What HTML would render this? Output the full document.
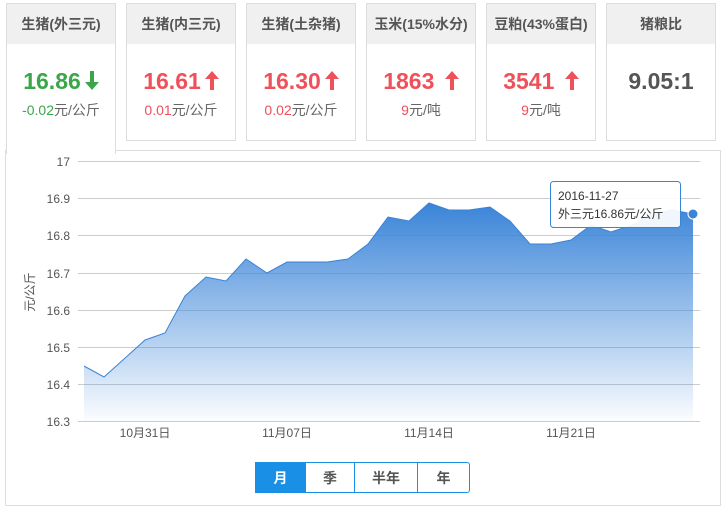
<!DOCTYPE html><html><head><meta charset="utf-8"><style>
body{margin:0;width:727px;height:512px;background:#fff;font-family:"Liberation Sans","Noto Sans CJK SC",sans-serif;position:relative;overflow:hidden}
.c{position:absolute;top:3px;width:108px;height:136px;border:1px solid #ddd;background:#fff;text-align:center}
.c .h{height:40px;background:#f0f0f0;line-height:40px;font-size:14px;font-weight:bold;color:#555}
.c .v{margin-top:22px;font-size:23px;font-weight:bold;line-height:30px}
.c .s{margin-top:4px;font-size:14px;color:#666}
.r{color:#f0505a}.g{color:#3aa64a}
.ar{display:inline-block;vertical-align:-1px;margin-left:4px}
#ch{position:absolute;left:5px;top:150px;width:714px;height:354px;border:1px solid #ddd;background:#fff}
.bt{position:absolute;top:462px;height:31px;line-height:31px;text-align:center;font-size:14px;font-weight:bold;color:#555;border:1px solid #1a8fe6;box-sizing:border-box;background:#fff}
</style></head><body>
<div id="ch"></div>
<div class="c" style="left:6px;height:150px;border-bottom:none"><div class="h">生猪(外三元)</div><div class="v g">16.86<svg class="ar" width="14" height="19" viewBox="0 0 14 19"><path d="M5 0H9V11H14L7 19L0 11H5Z" fill="#3aa64a"/></svg></div><div class="s"><span class="g">-0.02</span>元/公斤</div></div>
<div class="c" style="left:126px"><div class="h">生猪(内三元)</div><div class="v r">16.61<svg class="ar" width="14" height="19" viewBox="0 0 14 19"><path d="M5 19H9V8H14L7 0L0 8H5Z" fill="#f0505a"/></svg></div><div class="s"><span class="r">0.01</span>元/公斤</div></div>
<div class="c" style="left:246px"><div class="h">生猪(土杂猪)</div><div class="v r">16.30<svg class="ar" width="14" height="19" viewBox="0 0 14 19"><path d="M5 19H9V8H14L7 0L0 8H5Z" fill="#f0505a"/></svg></div><div class="s"><span class="r">0.02</span>元/公斤</div></div>
<div class="c" style="left:366px"><div class="h">玉米(15%水分)</div><div class="v r">1863 <svg class="ar" width="14" height="19" viewBox="0 0 14 19"><path d="M5 19H9V8H14L7 0L0 8H5Z" fill="#f0505a"/></svg></div><div class="s"><span class="r">9</span>元/吨</div></div>
<div class="c" style="left:486px"><div class="h">豆粕(43%蛋白)</div><div class="v r">3541 <svg class="ar" width="14" height="19" viewBox="0 0 14 19"><path d="M5 19H9V8H14L7 0L0 8H5Z" fill="#f0505a"/></svg></div><div class="s"><span class="r">9</span>元/吨</div></div>
<div class="c" style="left:606px"><div class="h">猪粮比</div><div class="v" style="color:#555">9.05:1</div></div>
<svg style="position:absolute;left:0;top:0" width="727" height="512">
<defs><linearGradient id="gr" x1="0" y1="0" x2="0" y2="1"><stop offset="0" stop-color="#3a84d8"/><stop offset="1" stop-color="#3a84d8" stop-opacity="0.02"/></linearGradient></defs>
<g stroke="#ccc" stroke-width="1">
<line x1="78" x2="700" y1="161.5" y2="161.5"/><line x1="78" x2="700" y1="198.5" y2="198.5"/><line x1="78" x2="700" y1="235.5" y2="235.5"/><line x1="78" x2="700" y1="273.5" y2="273.5"/><line x1="78" x2="700" y1="310.5" y2="310.5"/><line x1="78" x2="700" y1="347.5" y2="347.5"/><line x1="78" x2="700" y1="384.5" y2="384.5"/><line x1="78" x2="700" y1="421.5" y2="421.5"/>
</g>
<path d="M84,366 L104,377 L124,359 L145,340 L165,333 L185,296 L206,277 L226,281 L246,259 L267,273 L287,262 L307,262 L327,262 L348,259 L368,244 L388,217 L409,221 L429,203 L449,210 L469,210 L490,207 L510,221 L530,244 L551,244 L571,240 L591,225 L611,232 L632,225 L652,214 L672,210 L693,214 L693,421 L84,421Z" fill="url(#gr)" stroke="none"/>
<polyline points="84,366 104,377 124,359 145,340 165,333 185,296 206,277 226,281 246,259 267,273 287,262 307,262 327,262 348,259 368,244 388,217 409,221 429,203 449,210 469,210 490,207 510,221 530,244 551,244 571,240 591,225 611,232 632,225 652,214 672,210 693,214" fill="none" stroke="#3a84d8" stroke-width="1"/>
<circle cx="693" cy="214" r="5" fill="#3a84d8" stroke="#fff" stroke-width="1"/>
<g font-size="12" fill="#555" text-anchor="end"><text x="70" y="166">17</text><text x="70" y="203">16.9</text><text x="70" y="240">16.8</text><text x="70" y="278">16.7</text><text x="70" y="315">16.6</text><text x="70" y="352">16.5</text><text x="70" y="389">16.4</text><text x="70" y="426">16.3</text></g>
<g font-size="12" fill="#555" text-anchor="middle"><text x="145" y="437">10月31日</text><text x="287" y="437">11月07日</text><text x="429" y="437">11月14日</text><text x="571" y="437">11月21日</text></g>
<text transform="translate(34,292) rotate(-90)" font-size="12" fill="#555" text-anchor="middle">元/公斤</text>
<rect x="550.5" y="181.5" width="130" height="46" rx="3" fill="#fff" fill-opacity="0.92" stroke="#3a84d8"/>
<text x="558" y="200" font-size="12" fill="#333">2016-11-27</text>
<text x="558" y="218" font-size="12" fill="#333">外三元16.86元/公斤</text>
</svg>
<div class="bt" style="left:255px;width:51px;background:#1a8fe6;color:#fff">月</div>
<div class="bt" style="left:305px;width:50px">季</div>
<div class="bt" style="left:354px;width:64px">半年</div>
<div class="bt" style="left:417px;width:53px;border-radius:0 3px 3px 0">年</div>
</body></html>
